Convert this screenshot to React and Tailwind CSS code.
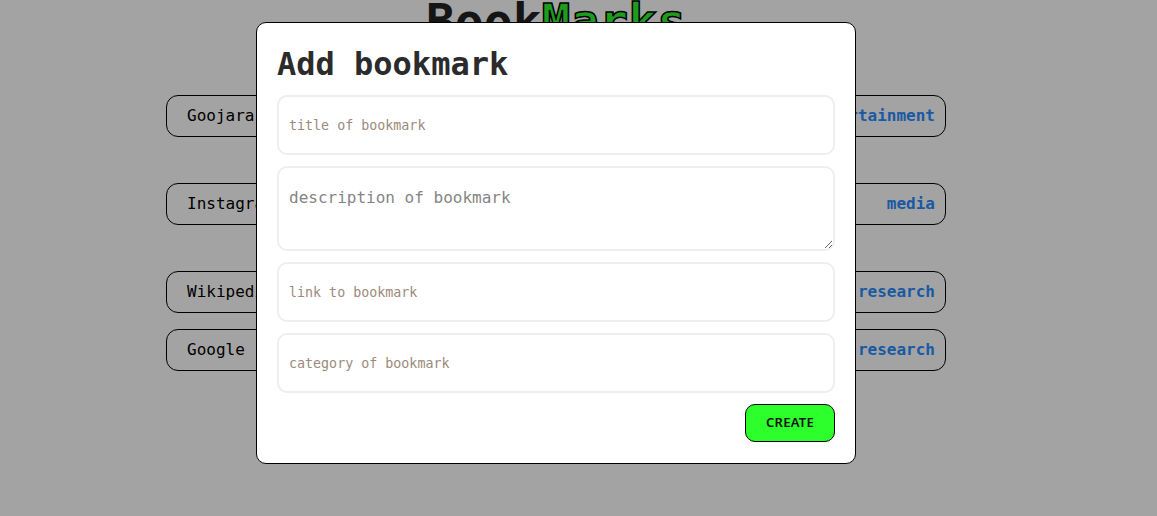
import React from "react";

const mono = { fontFamily: '"DejaVu Sans Mono", "Liberation Mono", monospace' };

const items = [
  { name: "Goojara", cat: "entertainment", mt: "mt-0" },
  { name: "Instagram", cat: "media", mt: "mt-[46px]" },
  { name: "Wikipedia", cat: "research", mt: "mt-[46px]" },
  { name: "Google", cat: "research", mt: "mt-[16px]" },
];

export default function App() {
  return (
    <div className="relative w-full h-[516px] bg-white overflow-hidden" style={mono}>
      <div className="w-[1112px] flex flex-col items-center">
        <h1 className="text-[48px] leading-none font-bold mt-[-3px] text-[#222]">
          Book
          <span
            className="text-[#2ef52e]"
            style={{ WebkitTextStroke: "1.5px #000" }}
          >
            Marks
          </span>
        </h1>
        <div className="mt-[50px] w-[780px] flex flex-col">
          {items.map((it) => (
            <div
              key={it.name}
              className={`${it.mt} h-[42px] flex items-center justify-between pl-5 pr-2.5 border border-black rounded-xl`}
            >
              <span className="text-[16px] text-black">{it.name}</span>
              <span className="text-[16px] font-bold text-[#2b8cff]">{it.cat}</span>
            </div>
          ))}
        </div>
      </div>

      <div className="absolute inset-0 bg-[rgba(0,0,0,0.36)]" />

      <div className="absolute left-[256px] top-[22px] w-[600px] bg-white border border-black rounded-[10px] px-5 pt-[22px] pb-[21px] flex flex-col">
        <h2 className="text-[32px] leading-[38px] font-bold text-[#2b2b2b]">Add bookmark</h2>
        <form className="mt-[12px] flex flex-col gap-[11px]" onSubmit={(e) => e.preventDefault()}>
          <input
            placeholder="title of bookmark"
            className="h-[60px] w-full border-2 border-[#eeeeee] rounded-[10px] px-[10px] text-[13.33px] outline-none placeholder:text-[#9b8a7b]"
            style={mono}
          />
          <textarea
            placeholder="description of bookmark"
            className="h-[85px] w-full border-2 border-[#eeeeee] rounded-[10px] px-[10px] pt-[20px] text-[16px] leading-[20px] outline-none resize-y placeholder:text-[#858585]"
            style={mono}
          />
          <input
            placeholder="link to bookmark"
            className="h-[60px] w-full border-2 border-[#eeeeee] rounded-[10px] px-[10px] text-[13.33px] outline-none placeholder:text-[#9b8a7b]"
            style={mono}
          />
          <input
            placeholder="category of bookmark"
            className="h-[60px] w-full border-2 border-[#eeeeee] rounded-[10px] px-[10px] text-[13.33px] outline-none placeholder:text-[#9b8a7b]"
            style={mono}
          />
          <div className="flex justify-end">
            <button
              type="submit"
              className="w-[90px] h-[38px] bg-[#2cff2c] border border-black rounded-[10px] text-[13px] font-semibold tracking-[0.3px] text-[#111]"
              style={{ fontFamily: '"Noto Sans", "Open Sans", sans-serif' }}
            >
              CREATE
            </button>
          </div>
        </form>
      </div>
    </div>
  );
}
